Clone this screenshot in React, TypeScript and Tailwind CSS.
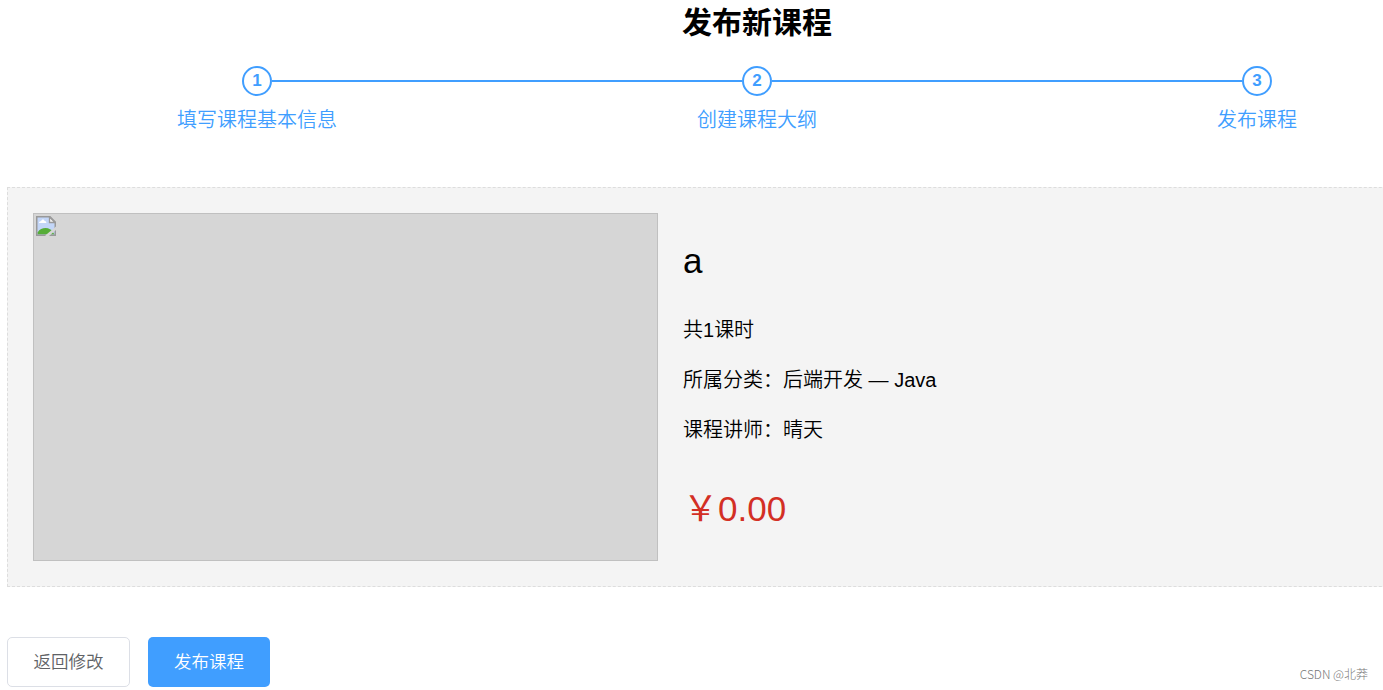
const steps = ['填写课程基本信息', '创建课程大纲', '发布课程']

const course = {
  title: 'a',
  lessonNum: 1,
  subjectLevelOne: '后端开发',
  subjectLevelTwo: 'Java',
  teacherName: '晴天',
  price: '0.00',
}

function Steps() {
  return (
    <div className="flex">
      {steps.map((title, index) => (
        <div key={title} className="flex w-[500px] flex-col items-center text-[#409eff]">
          <div className="flex w-full items-center">
            <div className={index === 0 ? 'h-0.5 flex-1' : 'h-0.5 flex-1 bg-[#409eff]'} />
            <div className="flex h-[30px] w-[30px] items-center justify-center rounded-full border-2 border-[#409eff] pb-0.5 text-[17px] leading-none font-bold">
              {index + 1}
            </div>
            <div className={index === steps.length - 1 ? 'h-0.5 flex-1' : 'h-0.5 flex-1 bg-[#409eff]'} />
          </div>
          <div className="mt-1 text-[20px] leading-10 font-[350]">{title}</div>
        </div>
      ))}
    </div>
  )
}

function BrokenImageIcon() {
  return (
    <svg className="h-5 w-5" viewBox="0 0 20 20" fill="none">
      <path d="M.5.5h13.500l5.500 5.500v13.500H.5z" fill="#c3d6f8" />
      <path d="M3 7c0-1.600 1.500-2 2-1.700C5.700 3 8.200 3.200 8.500 5 10 4.800 10.500 6 10.300 7z" fill="#fff" />
      <path d="M1.500 18.500v-2c2-3.500 5-4.500 8-4.500 3.500 0 6 2 7 3.500l2 3z" fill="#56ad38" />
      <path d="M.75 19.250V.75H14l5.250 5.250v13.250z" stroke="#999" strokeWidth="1.500" />
      <path d="M13.500 1v5.500H19z" fill="#f4f4f4" stroke="#999" strokeWidth="1.300" />
      <path d="M20 10.500 9.500 19.200V20H13L20 14z" fill="#d6d6d6" />
    </svg>
  )
}

export default function App() {
  return (
    <div className="relative h-[690px] w-full overflow-hidden bg-white font-['Liberation_Sans','Noto_Sans_CJK_SC',sans-serif] text-black">
      <div className="ml-[7px] w-[1500px]">
        <h2 className="h-[66px] pt-[3px] text-center text-[30px] leading-10 font-bold">发布新课程</h2>
        <Steps />

        {/* Course info */}
        <div className="mt-[47px] flex h-[400px] border border-dashed border-[#ddd] bg-[#f4f4f4] p-[25px]">
          <div className="h-[348px] w-[625px] shrink-0 border border-[#c0c0c0] bg-[#d6d6d6] pt-0.5 pl-0.5">
            <BrokenImageIcon />
          </div>
          <div className="ml-[25px] font-[350]">
            <h2 className="mt-7 text-[35px] leading-[40px] font-normal">{course.title}</h2>
            <p className="mt-[34px] text-[20px] leading-[30px]">共{course.lessonNum}课时</p>
            <p className="mt-5 text-[20px] leading-[30px]">
              所属分类：{course.subjectLevelOne} — {course.subjectLevelTwo}
            </p>
            <p className="mt-5 text-[20px] leading-[30px]">课程讲师：{course.teacherName}</p>
            <h3 className="mt-[44px] text-[35px] leading-[40px] font-normal text-[#d32f24]">￥{course.price}</h3>
          </div>
        </div>

        {/* Actions */}
        <div className="mt-[50px] flex gap-[18px] text-[17.5px] font-[350]">
          <button className="h-[50px] w-[123px] rounded-[5px] border border-[#dcdfe6] bg-white text-[#606266]">
            返回修改
          </button>
          <button className="h-[50px] w-[122px] rounded-[5px] bg-[#409eff] text-white">发布课程</button>
        </div>
      </div>

      <span className="absolute right-[15px] bottom-[7px] font-['Noto_Sans_CJK_SC',sans-serif] text-[12px] leading-[18px] font-light text-[#777]">
        CSDN @北莽
      </span>
    </div>
  )
}
